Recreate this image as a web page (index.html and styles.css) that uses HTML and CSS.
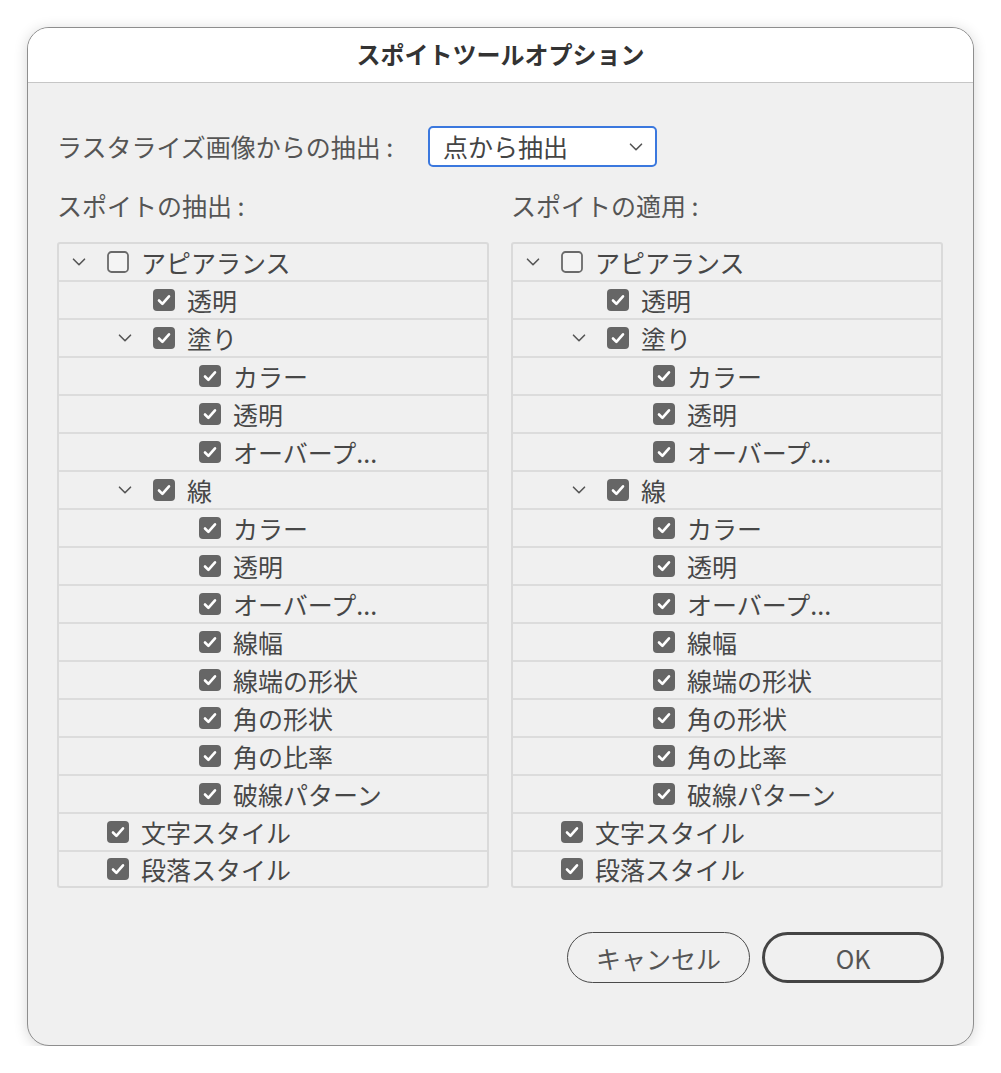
FILE: index.html
```html
<!DOCTYPE html>
<html>
<head>
  <title>スポイトツールオプション</title>
  <link rel="stylesheet" href="styles.css">
</head>
<body>
  <svg class="defs" width="0" height="0">
    <symbol id="on" viewBox="0 0 22 22">
      <rect width="22" height="22" rx="4" fill="#666"/>
      <path d="M6 11.5l3.4 3.4 6.6-7.6" fill="none" stroke="#fff" stroke-width="2.6" stroke-linecap="round" stroke-linejoin="round"/>
    </symbol>
    <symbol id="off" viewBox="0 0 22 22">
      <rect x="1" y="1" width="20" height="20" rx="3.5" fill="#f4f4f4" stroke="#6a6a6a" stroke-width="1.8"/>
    </symbol>
    <symbol id="chev" viewBox="0 0 14 8">
      <path d="M1.5 1.2l5.5 5.5 5.5-5.5" fill="none" stroke="#555" stroke-width="1.6" stroke-linecap="round" stroke-linejoin="round"/>
    </symbol>
  </svg>

  <div class="dialog">
    <div class="titlebar">スポイトツールオプション</div>

    <div class="content">
      <div class="option">
        <label class="option-label">ラスタライズ画像からの抽出 :</label>
        <div class="select">
          <span>点から抽出</span>
          <svg class="select-chev"><use href="#chev"/></svg>
        </div>
      </div>

      <div class="columns">
        <div class="column">
          <div class="heading">スポイトの抽出 :</div>
          <div class="tree">
            <div class="row"><span class="tog"><svg><use href="#chev"/></svg></span><svg class="cb"><use href="#off"/></svg><span>アピアランス</span></div>
            <div class="row lv1"><span class="tog"></span><svg class="cb"><use href="#on"/></svg><span>透明</span></div>
            <div class="row lv1"><span class="tog"><svg><use href="#chev"/></svg></span><svg class="cb"><use href="#on"/></svg><span>塗り</span></div>
            <div class="row lv2"><span class="tog"></span><svg class="cb"><use href="#on"/></svg><span>カラー</span></div>
            <div class="row lv2"><span class="tog"></span><svg class="cb"><use href="#on"/></svg><span>透明</span></div>
            <div class="row lv2"><span class="tog"></span><svg class="cb"><use href="#on"/></svg><span>オーバープ...</span></div>
            <div class="row lv1"><span class="tog"><svg><use href="#chev"/></svg></span><svg class="cb"><use href="#on"/></svg><span>線</span></div>
            <div class="row lv2"><span class="tog"></span><svg class="cb"><use href="#on"/></svg><span>カラー</span></div>
            <div class="row lv2"><span class="tog"></span><svg class="cb"><use href="#on"/></svg><span>透明</span></div>
            <div class="row lv2"><span class="tog"></span><svg class="cb"><use href="#on"/></svg><span>オーバープ...</span></div>
            <div class="row lv2"><span class="tog"></span><svg class="cb"><use href="#on"/></svg><span>線幅</span></div>
            <div class="row lv2"><span class="tog"></span><svg class="cb"><use href="#on"/></svg><span>線端の形状</span></div>
            <div class="row lv2"><span class="tog"></span><svg class="cb"><use href="#on"/></svg><span>角の形状</span></div>
            <div class="row lv2"><span class="tog"></span><svg class="cb"><use href="#on"/></svg><span>角の比率</span></div>
            <div class="row lv2"><span class="tog"></span><svg class="cb"><use href="#on"/></svg><span>破線パターン</span></div>
            <div class="row"><span class="tog"></span><svg class="cb"><use href="#on"/></svg><span>文字スタイル</span></div>
            <div class="row"><span class="tog"></span><svg class="cb"><use href="#on"/></svg><span>段落スタイル</span></div>
          </div>
        </div>

        <div class="column">
          <div class="heading">スポイトの適用 :</div>
          <div class="tree">
            <div class="row"><span class="tog"><svg><use href="#chev"/></svg></span><svg class="cb"><use href="#off"/></svg><span>アピアランス</span></div>
            <div class="row lv1"><span class="tog"></span><svg class="cb"><use href="#on"/></svg><span>透明</span></div>
            <div class="row lv1"><span class="tog"><svg><use href="#chev"/></svg></span><svg class="cb"><use href="#on"/></svg><span>塗り</span></div>
            <div class="row lv2"><span class="tog"></span><svg class="cb"><use href="#on"/></svg><span>カラー</span></div>
            <div class="row lv2"><span class="tog"></span><svg class="cb"><use href="#on"/></svg><span>透明</span></div>
            <div class="row lv2"><span class="tog"></span><svg class="cb"><use href="#on"/></svg><span>オーバープ...</span></div>
            <div class="row lv1"><span class="tog"><svg><use href="#chev"/></svg></span><svg class="cb"><use href="#on"/></svg><span>線</span></div>
            <div class="row lv2"><span class="tog"></span><svg class="cb"><use href="#on"/></svg><span>カラー</span></div>
            <div class="row lv2"><span class="tog"></span><svg class="cb"><use href="#on"/></svg><span>透明</span></div>
            <div class="row lv2"><span class="tog"></span><svg class="cb"><use href="#on"/></svg><span>オーバープ...</span></div>
            <div class="row lv2"><span class="tog"></span><svg class="cb"><use href="#on"/></svg><span>線幅</span></div>
            <div class="row lv2"><span class="tog"></span><svg class="cb"><use href="#on"/></svg><span>線端の形状</span></div>
            <div class="row lv2"><span class="tog"></span><svg class="cb"><use href="#on"/></svg><span>角の形状</span></div>
            <div class="row lv2"><span class="tog"></span><svg class="cb"><use href="#on"/></svg><span>角の比率</span></div>
            <div class="row lv2"><span class="tog"></span><svg class="cb"><use href="#on"/></svg><span>破線パターン</span></div>
            <div class="row"><span class="tog"></span><svg class="cb"><use href="#on"/></svg><span>文字スタイル</span></div>
            <div class="row"><span class="tog"></span><svg class="cb"><use href="#on"/></svg><span>段落スタイル</span></div>
          </div>
        </div>
      </div>

      <div class="actions">
        <button class="btn">キャンセル</button>
        <button class="btn primary">OK</button>
      </div>
    </div>
  </div>
</body>
</html>
```

FILE: styles.css
```css
* {
  box-sizing: border-box;
}

body {
  margin: 0;
  background-color: #ffffff;
  font-family: "Noto Sans CJK JP", "Noto Sans", sans-serif;
  color: #474747;
}

.defs {
  position: absolute;
  width: 0;
  height: 0;
  overflow: hidden;
}

.dialog {
  margin: 27px 0 0 27px;
  width: 947px;
  height: 1019px;
  background-color: #f0f0f0;
  border: 1px solid #8e8e8e;
  border-radius: 22px;
  overflow: hidden;
  box-shadow: 0 2px 14px rgba(0, 0, 0, 0.16);
}

.titlebar {
  height: 55px;
  background-color: #ffffff;
  border-bottom: 1px solid #c6c6c6;
  text-align: center;
  font-size: 24px;
  font-weight: bold;
  line-height: 52px;
  color: #333;
}

.content {
  padding: 0 29px;
}

.option {
  display: flex;
  align-items: center;
  margin-top: 43px;
  height: 41px;
}

.option-label {
  width: 371px;
  font-size: 25px;
  line-height: 1;
  color: #555;
}

.select {
  display: flex;
  align-items: center;
  justify-content: space-between;
  width: 229px;
  height: 41px;
  padding: 0 12px 0 13px;
  background-color: #ffffff;
  border: 2px solid #3b78de;
  border-radius: 5px;
  font-size: 25px;
  line-height: 1;
  color: #444;
}

.select-chev {
  width: 14px;
  height: 8px;
}

.columns {
  display: grid;
  grid-template-columns: 432px 432px;
  gap: 22px;
}

.heading {
  margin-top: 23px;
  height: 30px;
  line-height: 30px;
  font-size: 25px;
  color: #555;
  margin-bottom: 22px;
}

.tree {
  border: 2px solid #dadada;
  border-radius: 3px;
}

.row {
  display: flex;
  align-items: center;
  height: 38px;
  border-bottom: 2px solid #dcdcdc;
  font-size: 25px;
  line-height: 1;
}

.row:last-child {
  border-bottom: none;
  height: 34px;
}

.lv1 {
  padding-left: 46px;
}

.lv2 {
  padding-left: 92px;
}

.tog {
  display: flex;
  justify-content: center;
  width: 40px;
  margin-right: 8px;
}

.tog svg {
  width: 14px;
  height: 8px;
}

.cb {
  width: 22px;
  height: 22px;
  margin-right: 12px;
  flex-shrink: 0;
}

.actions {
  display: flex;
  justify-content: flex-end;
  gap: 12px;
  margin-top: 44px;
}

.btn {
  width: 183px;
  height: 51px;
  background: transparent;
  border: 1.5px solid #4a4a4a;
  border-radius: 26px;
  font-family: "Noto Sans CJK JP", "Noto Sans", sans-serif;
  font-size: 25px;
  color: #555;
  cursor: pointer;
}

.primary {
  width: 182px;
  border: 3px solid #444;
}
```
